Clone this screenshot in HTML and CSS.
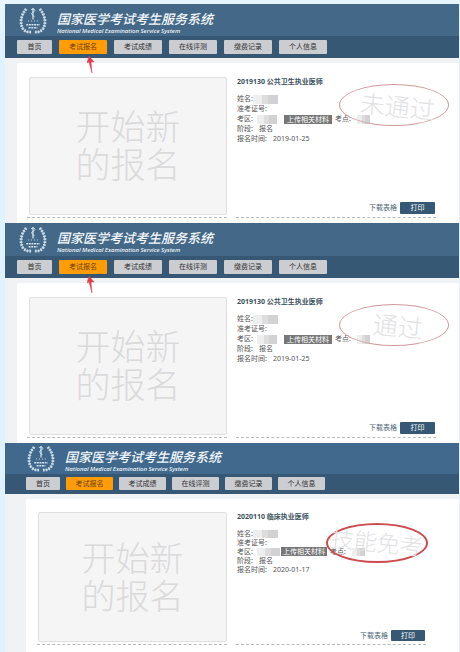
FILE: index.html
```
<!DOCTYPE html>
<html lang="zh">
<head>
    <meta charset="UTF-8">
    <meta name="viewport" content="width=device-width, initial-scale=1.0">
    <title>国家医学考试考生服务系统</title>
    <link rel="stylesheet" href="styles.css">
</head>
<body>
    <!-- shared drawings -->
    <svg class="symbols" aria-hidden="true">
        <symbol id="logo" viewBox="0 0 28 28">
            <g fill="none" stroke="currentColor">
                <!-- laurel branches -->
                <path d="M7 2C0.500 9 0 20 5 24c2 2 4 2 7 2M21 2c6.500 7 7 18 2 22c-2 2-4 2-7 2" stroke-width="0.700"/>
                <path d="M7 2C0.500 9 0 20 5 24c2 2 4 2 7 2M21 2c6.500 7 7 18 2 22c-2 2-4 2-7 2" stroke-width="3" stroke-dasharray="1.800 1.200" opacity="0.900"/>
                <!-- staff and snake -->
                <path d="M14 1v12" stroke-width="1.300"/>
                <path d="M12 3c1-1.500 4-1 4 0.500s-3.500 2-3.500 3.500 3 1.500 2.500 3.500" stroke-width="1"/>
                <path d="M9 14.500h10" stroke-width="1" stroke-dasharray="1 2"/>
                <path d="M7 18.500h14M9.500 21.500h9" stroke-width="1.500" stroke-dasharray="2 0.700"/>
            </g>
        </symbol>
        <symbol id="arrow" viewBox="0 0 8 18">
            <path d="M2 0L0 7l2-1 3 11-1-11 3 0z" fill="#e0404a" stroke="#e0404a" stroke-width="0.500"/>
        </symbol>
    </svg>

    <section class="panel">
        <header class="banner">
            <svg class="logo"><use href="#logo"/></svg>
            <div>
                <h1>国家医学考试考生服务系统</h1>
                <p class="subtitle">National Medical Examination Service System</p>
            </div>
        </header>
        <nav class="menu">
            <a class="home" href="#">首页</a>
            <a class="active" href="#">考试报名<svg class="arrow"><use href="#arrow"/></svg></a>
            <a href="#">考试成绩</a>
            <a href="#">在线评测</a>
            <a href="#">缴费记录</a>
            <a href="#">个人信息</a>
        </nav>
        <main class="card">
            <div class="new">
                <button class="start">开始新<br>的报名</button>
            </div>
            <div class="record">
                <h2>2019130 公共卫生执业医师</h2>
                <p>姓名:<span class="mask name"></span></p>
                <p>准考证号:</p>
                <p>考区:<span class="mask area"></span><button class="upload">上传相关材料</button>考点:<span class="mask site"></span></p>
                <p>阶段:<span class="value">报名</span></p>
                <p>报名时间:<span class="value">2019-01-25</span></p>
                <div class="actions">
                    <a href="#">下载表格</a>
                    <button class="print">打印</button>
                </div>
                <div class="stamp"><span>未通过</span></div>
            </div>
        </main>
    </section>

    <section class="panel">
        <header class="banner">
            <svg class="logo"><use href="#logo"/></svg>
            <div>
                <h1>国家医学考试考生服务系统</h1>
                <p class="subtitle">National Medical Examination Service System</p>
            </div>
        </header>
        <nav class="menu">
            <a class="home" href="#">首页</a>
            <a class="active" href="#">考试报名<svg class="arrow"><use href="#arrow"/></svg></a>
            <a href="#">考试成绩</a>
            <a href="#">在线评测</a>
            <a href="#">缴费记录</a>
            <a href="#">个人信息</a>
        </nav>
        <main class="card">
            <div class="new">
                <button class="start">开始新<br>的报名</button>
            </div>
            <div class="record">
                <h2>2019130 公共卫生执业医师</h2>
                <p>姓名:<span class="mask name"></span></p>
                <p>准考证号:</p>
                <p>考区:<span class="mask area"></span><button class="upload">上传相关材料</button>考点:<span class="mask site"></span></p>
                <p>阶段:<span class="value">报名</span></p>
                <p>报名时间:<span class="value">2019-01-25</span></p>
                <div class="actions">
                    <a href="#">下载表格</a>
                    <button class="print">打印</button>
                </div>
                <div class="stamp"><span>通过</span></div>
            </div>
        </main>
    </section>

    <section class="panel small">
        <header class="banner">
            <svg class="logo"><use href="#logo"/></svg>
            <div>
                <h1>国家医学考试考生服务系统</h1>
                <p class="subtitle">National Medical Examination Service System</p>
            </div>
        </header>
        <nav class="menu">
            <a class="home" href="#">首页</a>
            <a class="active" href="#">考试报名</a>
            <a href="#">考试成绩</a>
            <a href="#">在线评测</a>
            <a href="#">缴费记录</a>
            <a href="#">个人信息</a>
        </nav>
        <main class="card">
            <div class="new">
                <button class="start">开始新<br>的报名</button>
            </div>
            <div class="record">
                <h2>2020110 临床执业医师</h2>
                <p>姓名:<span class="mask name"></span></p>
                <p>准考证号:</p>
                <p>考区:<span class="mask area"></span><button class="upload">上传相关材料</button>考点:<span class="mask site"></span></p>
                <p>阶段:<span class="value">报名</span></p>
                <p>报名时间:<span class="value">2020-01-17</span></p>
                <div class="actions">
                    <a href="#">下载表格</a>
                    <button class="print">打印</button>
                </div>
                <div class="stamp"><span>技能免考</span></div>
            </div>
        </main>
    </section>
</body>
</html>
```
FILE: styles.css
```
* {
    box-sizing: border-box;
}
body {
    margin: 0;
    padding: 4px 1px 0 5px;
    background: linear-gradient(#e8f5fe, #dff2ff 40px);
    font-family: "Noto Sans", "Noto Sans CJK SC", sans-serif;
    font-size: 7px;
    line-height: 10px;
    color: #555;
}
h1, h2, p {
    margin: 0;
}
a {
    color: inherit;
    text-decoration: none;
}
button {
    padding: 0;
    border: none;
    font: inherit;
    cursor: pointer;
}
.symbols {
    position: absolute;
    width: 0;
    height: 0;
}
.panel {
    background-color: #f1f2f4;
}

/* header */
.banner {
    display: flex;
    gap: 10px;
    height: 32px;
    padding: 3px 0 0 14px;
    background-color: #446988;
    color: #f4f8fb;
}
.logo {
    width: 28px;
    height: 27px;
    color: #d3e4f0;
}
h1 {
    margin-top: 5px;
    font-size: 13px;
    font-weight: 500;
    font-style: italic;
    line-height: 15px;
}
.subtitle {
    font-size: 6px;
    font-weight: 500;
    font-style: italic;
    line-height: 8px;
}
.menu {
    display: flex;
    gap: 7px;
    padding: 4px 12px;
    background-color: #365874;
}
.menu a {
    position: relative;
    width: 48px;
    border-radius: 1px;
    background-color: #cccdd1;
    color: #333;
    line-height: 14px;
    text-align: center;
}
.menu .home {
    width: 35px;
}
.menu .active {
    background-color: #ff9c08;
    color: #6b4410;
}
.arrow {
    position: absolute;
    left: 28px;
    top: 16px;
    width: 8px;
    height: 18px;
}

/* content */
.card {
    display: grid;
    grid-template-columns: 1fr 1fr;
    gap: 9px;
    margin: 5px 0 0 12px;
    padding: 14px 23px 5px 10px;
    background-color: #fff;
}
.new, .record {
    border-bottom: 1px dashed #bbb;
}
.new {
    padding: 0 0 2px 2px;
}
.start {
    width: 100%;
    height: 138px;
    border: 1px solid #e0e0e2;
    border-radius: 2px;
    background-color: #f5f5f6;
    color: #dadadb;
    font-size: 35px;
    font-weight: 300;
    line-height: 38px;
}
.record {
    position: relative;
    display: flex;
    flex-direction: column;
    padding: 0 1px 3px;
}
h2 {
    margin-bottom: 7px;
    color: #3c5260;
    font-size: 7px;
    line-height: 10px;
}
.record p {
    display: flex;
    align-items: center;
    height: 10px;
    white-space: nowrap;
}
.mask {
    height: 9px;
    background: linear-gradient(90deg, #eee 35%, #ddd 35%, #ddd 60%, #d2d2d4 60%);
}
.name {
    width: 25px;
}
.area {
    width: 20px;
    margin: 0 7px 0 4px;
}
.site {
    width: 13px;
    margin-left: 6px;
}
.value {
    margin-left: 6px;
}
.upload {
    width: 48px;
    height: 9px;
    margin-right: 3px;
    background-color: #777;
    color: #fff;
    line-height: 9px;
}
.actions {
    display: flex;
    justify-content: flex-end;
    align-items: center;
    gap: 3px;
    margin-top: auto;
    color: #4e6778;
}
.print {
    width: 35px;
    height: 12px;
    border-radius: 1px;
    background-color: #365874;
    color: #fff;
}
.stamp {
    position: absolute;
    right: -13px;
    top: 7px;
    width: 110px;
    height: 42px;
    padding-left: 8px;
    border: 1px solid #cf9a9e;
    border-radius: 50%;
    color: #e2e2e4;
    font-size: 25px;
    font-weight: 300;
    line-height: 42px;
    text-align: center;
    white-space: nowrap;
    pointer-events: none;
}
.stamp span {
    display: inline-block;
    transform: rotate(6deg);
}

/* the second banner is slightly taller */
.panel:nth-of-type(2) .banner {
    height: 33px;
}

/* third record is shown a little smaller */
.small .banner {
    height: 31px;
    padding: 2px 0 0 22px;
    background-color: #40698d;
}
.small .menu {
    gap: 6px;
    padding: 3px 21px 4px;
}
.small .menu a {
    width: 47px;
    line-height: 13px;
}
.small .menu .home {
    width: 34px;
}
.small .card {
    margin-left: 21px;
    padding: 13px 33px 7px 11px;
}
.small .new {
    padding-left: 1px;
}
.small .start {
    height: 130px;
    font-size: 34px;
}
.small .record p {
    height: 9px;
}
.small .mask {
    height: 8px;
}
.small .upload {
    width: 46px;
}
.small .area {
    width: 23px;
    margin-right: 1px;
}
.small .print {
    width: 34px;
    height: 11px;
}
.small .stamp {
    right: -2px;
    top: 11px;
    width: 102px;
    height: 40px;
    padding: 0;
    border: 2px solid #cc4c50;
    font-size: 23px;
    line-height: 34px;
}
```
